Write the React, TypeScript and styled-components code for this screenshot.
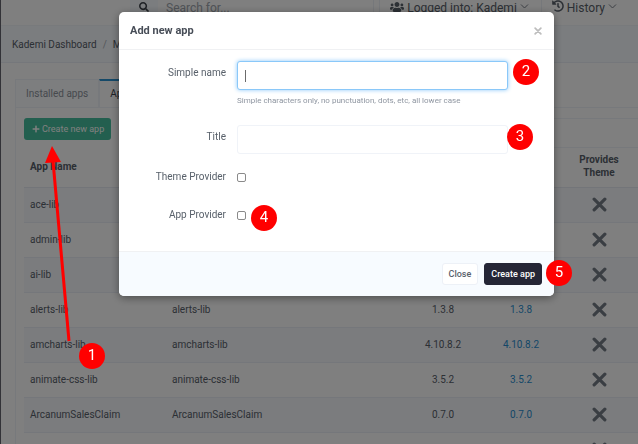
import React from "react";
import styled, { createGlobalStyle, css } from "styled-components";
import { FaSearch, FaUsers, FaHistory, FaPlus } from "react-icons/fa";

const GlobalStyle = createGlobalStyle`
  *, *::before, *::after { box-sizing: border-box; }
  html, body, #root { height: 100%; }
  body {
    margin: 0;
    overflow: hidden;
    background: #fff;
    color: #58606a;
    font-family: Roboto, "Liberation Sans", sans-serif;
    font-size: 10px;
    line-height: 16px;
  }
  button, input { font: inherit; color: inherit; }
`;

const Page = styled.div`
  height: 100%;
  overflow: hidden;
  border-left: 1px solid #64646e;
`;

const TopBar = styled.header`
  display: flex;
  height: 26px;
  padding-left: 129px;
  padding-right: 9px;
  background: #fff;
  font-size: 12px;
  border-bottom: 1px solid #f0f4f9;
`;

const SearchButton = styled.button`
  display: flex;
  align-items: flex-start;
  justify-content: center;
  width: 28px;
  padding: 2px 0 0;
  border: 0;
  background: #f7fbff;
  color: #3e444c;
  font-size: 10px;
`;

const SearchInput = styled.input`
  flex: 1;
  min-width: 0;
  margin-right: 5px;
  padding: 0 8px 9px;
  border: 0;
  border-right: 1px solid #edf1f6;
  background: transparent;
  &::placeholder { color: #a0a6ae; opacity: 1; }
`;

const TopItem = styled.button`
  display: flex;
  align-items: flex-start;
  gap: 3px;
  padding: 0 12px 0 10px;
  border: 0;
  border-left: 1px solid #edf1f6;
  background: transparent;
  white-space: nowrap;
`;

const Breadcrumb = styled.nav`
  display: flex;
  align-items: center;
  gap: 6px;
  height: 37px;
  padding: 2px 0 0 11px;
  border-bottom: 1px solid #eaeff6;
  background: #f7fbff;
  a { color: inherit; text-decoration: none; }
`;

const Slash = styled.span`
  color: #a9afb6;
`;

const Content = styled.main`
  padding: 16px 0 0 14px;
`;

const Tabs = styled.div`
  display: flex;
`;

const Tab = styled.button<{ $active?: boolean }>`
  height: 28px;
  padding: 0 10px;
  border: 1px solid #eff3f8;
  border-bottom: 0;
  background: #fafcff;
  color: #8e949c;
  white-space: nowrap;
  ${(p) =>
    p.$active &&
    css`
      border-top: 2px solid #2a93d1;
      background: #fff;
      color: #3e444c;
    `}
`;

const Panel = styled.section`
  padding: 10px 0 0 8px;
  border-top: 1px solid #eff3f8;
  border-left: 1px solid #eff3f8;
`;

const Toolbar = styled.div`
  display: flex;
  align-items: flex-start;
  gap: 24px;
  height: 30px;
`;

const CreateWrap = styled.div`
  position: relative;
`;

const CreateButton = styled.button`
  display: flex;
  align-items: center;
  gap: 2px;
  height: 22px;
  padding: 0 7px 0 8px;
  border: 0;
  border-radius: 3px;
  background: #46be9e;
  color: #fff;
  font-size: 9px;
  white-space: nowrap;
`;

const Filter = styled.input`
  flex: 1;
  min-width: 0;
  height: 30px;
  border: 1px solid #eff3f8;
  border-right: 0;
  background: transparent;
`;

const Table = styled.table`
  width: 100%;
  table-layout: fixed;
  border-collapse: collapse;
`;

const Col = styled.col<{ $w?: number }>`
  width: ${(p) => (p.$w ? `${p.$w}px` : "auto")};
`;

const Th = styled.th<{ $center?: boolean }>`
  height: 39px;
  padding: 0 6px 2px;
  border-bottom: 1px solid #e6eaf2;
  font-weight: 700;
  line-height: 13px;
  text-align: ${(p) => (p.$center ? "center" : "left")};
`;

const Row = styled.tr`
  height: 35px;
  border-bottom: 1px solid #eaeef6;
  &:nth-child(odd) { background: #f6f9fd; }
`;

const Td = styled.td<{ $center?: boolean }>`
  padding: 0 6px;
  text-align: ${(p) => (p.$center ? "center" : "left")};
  a { color: #2a8fd1; text-decoration: none; }
  svg { display: block; margin: 0 auto; color: #757c86; }
`;

const Overlay = styled.div`
  position: fixed;
  inset: 0;
  z-index: 10;
  display: flex;
  align-items: flex-start;
  padding: 12px 84px 0 119px;
  background: rgba(0, 0, 0, 0.5);
`;

const Dialog = styled.form`
  flex: 1;
  min-width: 0;
  border-radius: 5px;
  background: #fff;
  box-shadow: 0 2px 8px rgba(0, 0, 0, 0.4);
`;

const DialogHeader = styled.header`
  display: flex;
  align-items: center;
  justify-content: space-between;
  height: 38px;
  padding: 0 12px 0 11px;
  border-bottom: 1px solid #f0f1f3;
`;

const DialogTitle = styled.h2`
  margin: 0;
  color: #474d57;
  font-size: 11px;
  font-weight: 700;
`;

const CloseIcon = styled.button`
  display: flex;
  padding: 0;
  border: 0;
  background: transparent;
  color: #bdbdbd;
`;

const DialogBody = styled.div`
  display: grid;
  grid-template-columns: 107px minmax(0, 1fr);
  column-gap: 11px;
  padding: 11px 46px 28px 0;
`;

const Label = styled.label<{ $check?: boolean }>`
  padding-top: ${(p) => (p.$check ? 0 : 4)}px;
  text-align: right;
`;

const Field = styled.div<{ $gap: number }>`
  position: relative;
  margin-bottom: ${(p) => p.$gap}px;
`;

const Caret = styled.span`
  position: absolute;
  top: 9px;
  left: 8px;
  display: none;
  width: 1px;
  height: 12px;
  background: #6b6b6b;
`;

const TextInput = styled.input`
  display: block;
  width: 100%;
  height: 29px;
  padding: 0 8px;
  border: 1px solid #f0f3f8;
  border-radius: 3px;
  outline: 0;
  background: #fff;
  &:focus {
    border-color: #8ac8f9;
    box-shadow: 0 0 4px #8ac8f9;
  }
  &:focus:placeholder-shown { caret-color: transparent; }
  &:focus:placeholder-shown + ${Caret} { display: block; }
`;

const Help = styled.small`
  display: block;
  margin-top: 3px;
  color: #8f96a1;
  font-size: 8px;
  white-space: nowrap;
`;

const CheckField = styled.div<{ $last?: boolean }>`
  position: relative;
  display: flex;
  align-items: center;
  height: 16px;
  margin-bottom: ${(p) => (p.$last ? 0 : 22)}px;
`;

const Checkbox = styled.input`
  appearance: none;
  width: 9px;
  height: 9px;
  margin: 0;
  border: 1px solid #8a8a8a;
  border-radius: 2px;
  background: #fff;
  &:checked { background: #2a8fd1; }
`;

const DialogFooter = styled.footer`
  position: relative;
  display: flex;
  align-items: center;
  justify-content: flex-end;
  gap: 6px;
  height: 45px;
  padding: 0 12px;
  border-top: 1px solid #f0f1f3;
  border-radius: 0 0 5px 5px;
  background: #f7fbff;
`;

const Button = styled.button<{ $primary?: boolean }>`
  height: 22px;
  padding: 0 6px;
  border: 1px solid ${(p) => (p.$primary ? "#252636" : "#edf1f7")};
  border-radius: 3px;
  background: ${(p) => (p.$primary ? "#252636" : "#fff")};
  color: ${(p) => (p.$primary ? "#fff" : "#58606a")};
  font-size: 9px;
  font-weight: 500;
  white-space: nowrap;
`;

const Badge = styled.span<{ $top: number; $left?: number; $right?: number }>`
  position: absolute;
  z-index: 20;
  top: ${(p) => p.$top}px;
  ${(p) => p.$left !== undefined && `left: ${p.$left}px;`}
  ${(p) => p.$right !== undefined && `right: ${p.$right}px;`}
  width: 26px;
  height: 26px;
  border-radius: 50%;
  background: #ff0000;
  color: #fff;
  font-size: 15px;
  line-height: 25px;
  text-align: center;
`;

const Arrow = styled.svg`
  position: absolute;
  z-index: 20;
  top: 28px;
  left: 20px;
  pointer-events: none;
`;

const Chevron = () => (
  <svg width="9" height="14" viewBox="0 0 9 14" fill="none" stroke="#777e87" aria-hidden="true">
    <path d="M1 4.5 4.5 8 8 4.5" />
  </svg>
);

const Cross = ({ size, width }: { size: number; width: number }) => (
  <svg width={size} height={size} viewBox="0 0 14 14" stroke="currentColor" strokeWidth={width} strokeLinecap="round" aria-hidden="true">
    <path d="M2 2 12 12M12 2 2 12" />
  </svg>
);

const apps = [
  ["ace-lib", "1.2.0"],
  ["admin-lib", "1.4.1"],
  ["ai-lib", "1.0.3"],
  ["alerts-lib", "1.3.8"],
  ["amcharts-lib", "4.10.8.2"],
  ["animate-css-lib", "3.5.2"],
  ["ArcanumSalesClaim", "0.7.0"],
  ["", ""],
];

export default function App() {
  return (
    <>
      <GlobalStyle />
      <Page>
        <TopBar>
          <SearchButton type="button" aria-label="Search"><FaSearch /></SearchButton>
          <SearchInput placeholder="Search for..." aria-label="Search for" />
          <TopItem type="button"><FaUsers size={14} />Logged into: Kademi <Chevron /></TopItem>
          <TopItem type="button"><FaHistory size={12} />History <Chevron /></TopItem>
        </TopBar>
        <Breadcrumb aria-label="Breadcrumb">
          <a href="#dashboard">Kademi Dashboard</a>
          <Slash>/</Slash>
          <a href="#apps">Manage apps</a>
        </Breadcrumb>
        <Content>
          <Tabs>
            <Tab type="button">Installed apps</Tab>
            <Tab type="button" $active>Apps</Tab>
          </Tabs>
          <Panel>
            <Toolbar>
              <CreateWrap>
                <CreateButton type="button"><FaPlus size={8} />Create new app</CreateButton>
                <Arrow width="36" height="200" viewBox="0 0 36 200" aria-hidden="true">
                  <path d="M9 15 25 195" stroke="#ff0000" strokeWidth="3" />
                  <path d="M8 0 17 16 1 17Z" fill="#ff0000" />
                </Arrow>
                <Badge $top={225} $left={55}>1</Badge>
              </CreateWrap>
              <Filter aria-label="Filter apps" />
            </Toolbar>
            <Table>
              <colgroup>
                <Col $w={142} /><Col /><Col $w={78} /><Col $w={78} /><Col $w={78} />
              </colgroup>
              <thead>
                <tr>
                  <Th>App Name</Th>
                  <Th>Title</Th>
                  <Th $center>Version</Th>
                  <Th $center>Latest</Th>
                  <Th $center>Provides<br />Theme</Th>
                </tr>
              </thead>
              <tbody>
                {apps.map(([name, version], i) => (
                  <Row key={i}>
                    <Td>{name}</Td>
                    <Td>{name}</Td>
                    <Td $center>{version}</Td>
                    <Td $center><a href="#version">{version}</a></Td>
                    <Td $center><Cross size={15} width={3} /></Td>
                  </Row>
                ))}
              </tbody>
            </Table>
          </Panel>
        </Content>
      </Page>
      <Overlay>
        <Dialog role="dialog" aria-labelledby="dialog-title" onSubmit={(e) => e.preventDefault()}>
          <DialogHeader>
            <DialogTitle id="dialog-title">Add new app</DialogTitle>
            <CloseIcon type="button" aria-label="Close"><Cross size={8} width={3} /></CloseIcon>
          </DialogHeader>
          <DialogBody>
            <Label htmlFor="name">Simple name</Label>
            <Field $gap={16}>
              <TextInput id="name" placeholder=" " autoFocus autoComplete="off" />
              <Caret />
              <Help>Simple characters only, no punctuation, dots, etc, all lower case</Help>
              <Badge $top={-2} $right={-31}>2</Badge>
            </Field>
            <Label htmlFor="title">Title</Label>
            <Field $gap={15}>
              <TextInput id="title" autoComplete="off" />
              <Badge $top={-1} $right={-25}>3</Badge>
            </Field>
            <Label $check htmlFor="theme">Theme Provider</Label>
            <CheckField><Checkbox type="checkbox" id="theme" /></CheckField>
            <Label $check htmlFor="provider">App Provider</Label>
            <CheckField $last>
              <Checkbox type="checkbox" id="provider" />
              <Badge $top={-2} $left={14}>4</Badge>
            </CheckField>
          </DialogBody>
          <DialogFooter>
            <Button type="button">Close</Button>
            <Button type="submit" $primary>Create app</Button>
            <Badge $top={8} $right={-18}>5</Badge>
          </DialogFooter>
        </Dialog>
      </Overlay>
    </>
  );
}
